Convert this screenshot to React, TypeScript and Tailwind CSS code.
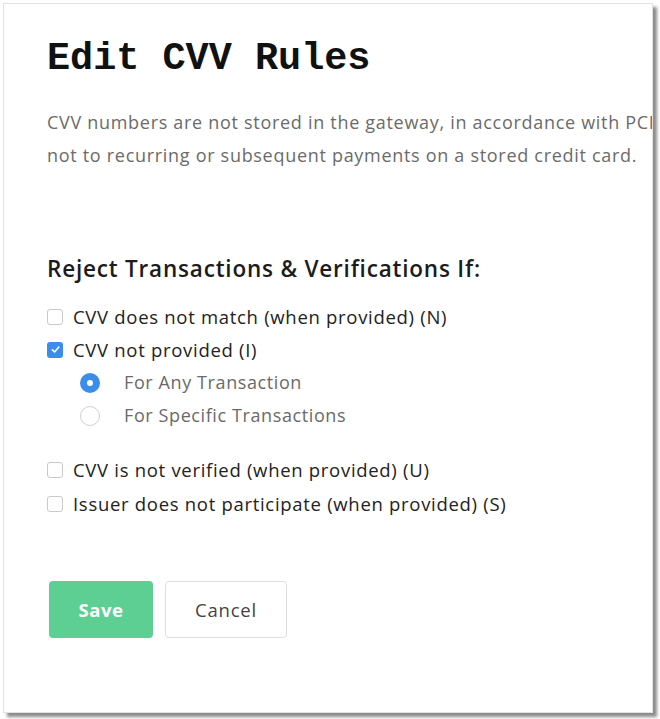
import React from 'react'

function Checkbox({ checked }: { checked?: boolean }) {
    if (checked) {
        return (
            <span className="flex h-[16px] w-[16px] items-center justify-center rounded-[3px] bg-[#3b8cec]">
                <svg width="11" height="11" viewBox="0 0 12 12" fill="none">
                    <path d="M2.5 6.3 5 8.7 9.6 3.3" stroke="#fff" strokeWidth="1.8" strokeLinecap="round" strokeLinejoin="round" />
                </svg>
            </span>
        )
    }
    return <span className="block h-[16px] w-[16px] rounded-[3px] border border-[#c9c9c9] bg-white" />
}

function Radio({ checked }: { checked?: boolean }) {
    if (checked) {
        return (
            <span className="flex h-[20px] w-[20px] items-center justify-center rounded-full bg-[#3a8de9]">
                <span className="block h-[6px] w-[6px] rounded-full bg-white" />
            </span>
        )
    }
    return <span className="block h-[20px] w-[20px] rounded-full border border-[#cfcfcf] bg-white" />
}

function CheckRow({ label, checked, className = 'h-[33px]' }: { label: string; checked?: boolean; className?: string }) {
    return (
        <label className={`flex items-center gap-[10px] ${className}`}>
            <Checkbox checked={checked} />
            <span className="text-[18.5px] tracking-[0.7px] text-[#222]">{label}</span>
        </label>
    )
}

function RadioRow({ label, checked }: { label: string; checked?: boolean }) {
    return (
        <label className="flex h-[33px] items-center gap-[24px] pl-[33px]">
            <Radio checked={checked} />
            <span className="text-[18px] tracking-[0.6px] text-[#6a6a6a]">{label}</span>
        </label>
    )
}

export default function App() {
    return (
        <div className="min-h-screen bg-white p-[3px] font-['Open_Sans',sans-serif]">
            <div className="h-[710px] w-[650px] overflow-hidden border border-[#e2e2e2] bg-white shadow-[4px_4px_3px_rgba(0,0,0,0.45)]">
                <div className="pl-[43px] pt-[33px]">
                    {/* Title */}
                    <h1 className="h-[44px] font-['Liberation_Mono','Courier_New',monospace] text-[38.5px] font-bold leading-[44px] text-[#111]">
                        Edit CVV Rules
                    </h1>

                    {/* Description */}
                    <div className="mt-[25px] whitespace-nowrap text-[18px] leading-[33px] tracking-[0.7px] text-[#6b6b6b]">
                        <p>CVV numbers are not stored in the gateway, in accordance with PCI</p>
                        <p>not to recurring or subsequent payments on a stored credit card.</p>
                    </div>

                    {/* Rules */}
                    <h2 className="mt-[82px] text-[22.5px] font-semibold leading-[30px] tracking-[0.8px] text-[#1c1c1c]">
                        Reject Transactions &amp; Verifications If:
                    </h2>

                    <div className="mt-[16px] flex flex-col">
                        <CheckRow label="CVV does not match (when provided) (N)" />
                        <CheckRow label="CVV not provided (I)" checked />
                        <RadioRow label="For Any Transaction" checked />
                        <RadioRow label="For Specific Transactions" />
                        <CheckRow label="CVV is not verified (when provided) (U)" className="mt-[21px] h-[34px]" />
                        <CheckRow label="Issuer does not participate (when provided) (S)" className="h-[34px]" />
                    </div>

                    {/* Actions */}
                    <div className="mt-[60px] flex gap-[12px] pl-[2px]">
                        <button className="h-[57px] w-[104px] rounded-[4px] bg-[#5dcf93] text-[18.5px] font-bold tracking-[0.5px] text-white">
                            Save
                        </button>
                        <button className="h-[57px] w-[122px] rounded-[4px] border border-[#dedede] bg-white text-[18.5px] tracking-[0.8px] text-[#444]">
                            Cancel
                        </button>
                    </div>
                </div>
            </div>
        </div>
    )
}
